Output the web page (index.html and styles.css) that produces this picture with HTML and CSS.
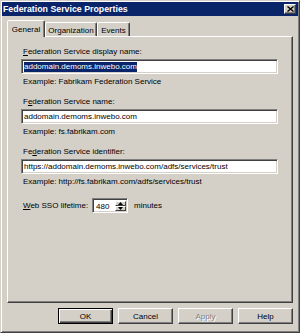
FILE: index.html
```html
<!DOCTYPE html>
<html lang="en">
<head>
    <meta charset="UTF-8">
    <title>Federation Service Properties</title>
    <link rel="stylesheet" href="styles.css">
</head>
<body>
    <div class="window">
        <div class="titlebar">
            <span class="title">Federation Service Properties</span>
            <div class="close-btn">
                <svg width="7" height="6" viewBox="0 0 7 6"><path d="M0.5 0.5 L6.5 5.5 M6.5 0.5 L0.5 5.5" stroke="#000" stroke-width="1.4"/></svg>
            </div>
        </div>

        <div class="tabs">
            <div class="tab active">General</div>
            <div class="tab">Organization</div>
            <div class="tab">Events</div>
        </div>

        <div class="panel">
            <div class="group">
                <div class="label"><u>F</u>ederation Service display name:</div>
                <div class="field"><span class="selected">addomain.demoms.inwebo.com</span></div>
                <div class="hint">Example: Fabrikam Federation Service</div>
            </div>
            <div class="group">
                <div class="label">F<u>e</u>deration Service name:</div>
                <div class="field">addomain.demoms.inwebo.com</div>
                <div class="hint">Example: fs.fabrikam.com</div>
            </div>
            <div class="group">
                <div class="label">Fe<u>d</u>eration Service identifier:</div>
                <div class="field">https://addomain.demoms.inwebo.com/adfs/services/trust</div>
                <div class="hint">Example: http://fs.fabrikam.com/adfs/services/trust</div>
            </div>
            <div class="lifetime">
                <span class="lifetime-label"><u>W</u>eb SSO lifetime:</span>
                <div class="spinner">
                    <span class="spinner-value">480</span>
                    <div class="spinner-buttons">
                        <div class="spin"><svg width="5" height="3" viewBox="0 0 5 3"><path d="M2.5 0 L5 3 L0 3 Z" fill="#000"/></svg></div>
                        <div class="spin"><svg width="5" height="3" viewBox="0 0 5 3"><path d="M0 0 L5 0 L2.5 3 Z" fill="#000"/></svg></div>
                    </div>
                </div>
                <span class="unit">minutes</span>
            </div>
        </div>

        <div class="buttons">
            <div class="btn default">OK</div>
            <div class="btn">Cancel</div>
            <div class="btn disabled">Apply</div>
            <div class="btn">Help</div>
        </div>
    </div>
</body>
</html>
```

FILE: styles.css
```css
:root {
    --face: #d4d0c8;
    --shadow: #808080;
    --dark: #404040;
    --title: #0a246a;
}

* {
    box-sizing: border-box;
}

body {
    margin: 0;
    background: var(--face);
    font-family: 'Liberation Sans', Arial, sans-serif;
    font-size: 8px;
    color: #000;
}

.window {
    width: 300px;
    height: 333px;
    padding: 1px;
    background: var(--face);
    border: 1px solid;
    border-color: var(--face) var(--dark) var(--dark) var(--face);
    box-shadow: inset 1px 1px #fff, inset -1px -1px var(--shadow);
}

.titlebar {
    height: 14px;
    background: var(--title);
    display: flex;
    align-items: center;
    justify-content: space-between;
    padding: 0 2px 0 1px;
}

.title {
    color: #fff;
    font-weight: bold;
    font-size: 8.8px;
}

.close-btn {
    width: 12px;
    height: 10px;
    background: var(--face);
    border: 1px solid;
    border-color: #fff var(--dark) var(--dark) #fff;
    box-shadow: inset -1px -1px var(--shadow);
    display: flex;
    align-items: center;
    justify-content: center;
}

/* Tabs */
.tabs {
    display: flex;
    align-items: flex-end;
    height: 20px;
    margin: 0 5px;
}

.tab {
    height: 14px;
    border: 1px solid;
    border-bottom: none;
    border-color: #fff var(--dark) transparent #fff;
    border-radius: 2px 2px 0 0;
    box-shadow: inset -1px 0 var(--shadow);
    display: flex;
    align-items: center;
    justify-content: center;
    padding-top: 1px;
}

.tab:nth-child(2) { width: 52px; }
.tab:nth-child(3) { width: 33px; }

.tab.active {
    width: 38px;
    height: 17px;
    margin-bottom: -1px;
    position: relative;
    z-index: 1;
    background: var(--face);
    padding-top: 0;
}

/* Panel */
.panel {
    height: 267px;
    margin: 0 5px;
    border: 1px solid;
    border-color: #fff var(--dark) var(--dark) #fff;
    box-shadow: inset -1px -1px var(--shadow);
    padding: 10px 14px 0 13px;
}

.group {
    margin-bottom: 10px;
}

.label,
.hint {
    line-height: 10px;
    padding-left: 2px;
    white-space: nowrap;
}

.label {
    margin-bottom: 2px;
}

.hint {
    margin-top: 3px;
}

.field {
    height: 15px;
    background: #fff;
    border: 1px solid;
    border-color: var(--shadow) #fff #fff var(--shadow);
    box-shadow: inset 1px 1px var(--dark), inset -1px -1px var(--face);
    padding: 0 2px;
    display: flex;
    align-items: center;
    white-space: nowrap;
    overflow: hidden;
}

.selected {
    background: var(--title);
    color: #fff;
    line-height: 10px;
}

.lifetime {
    display: flex;
    align-items: center;
    height: 15px;
    margin-top: 11px;
    padding-left: 2px;
}

.lifetime-label {
    width: 69px;
}

.spinner {
    width: 36px;
    height: 15px;
    background: #fff;
    border: 1px solid;
    border-color: var(--shadow) #fff #fff var(--shadow);
    box-shadow: inset 1px 1px var(--dark), inset -1px -1px var(--face);
    display: flex;
    align-items: stretch;
    padding: 2px 1px 1px 2px;
}

.spinner-value {
    flex: 1;
    display: flex;
    align-items: center;
    padding-left: 1px;
}

.spinner-buttons {
    width: 11px;
    display: flex;
    flex-direction: column;
}

.spin {
    flex: 1;
    background: var(--face);
    border: 1px solid;
    border-color: #fff var(--dark) var(--dark) #fff;
    display: flex;
    align-items: center;
    justify-content: center;
}

.unit {
    margin-left: 6px;
}

/* Bottom buttons */
.buttons {
    display: flex;
    justify-content: flex-end;
    gap: 5px;
    margin: 5px 5px 0;
}

.btn {
    width: 55px;
    height: 16px;
    border: 1px solid;
    border-color: #fff var(--dark) var(--dark) #fff;
    box-shadow: inset -1px -1px var(--shadow);
    display: flex;
    align-items: center;
    justify-content: center;
}

.btn.default {
    border-color: #000;
    box-shadow: inset 1px 1px #fff, inset -1px -1px var(--dark), inset -2px -2px var(--shadow);
}

.btn.disabled {
    color: var(--shadow);
    text-shadow: 1px 1px #fff;
}
```
